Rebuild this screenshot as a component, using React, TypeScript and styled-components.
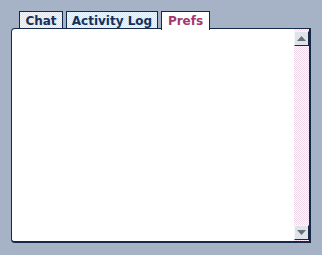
import styled, { createGlobalStyle } from "styled-components";

const GlobalStyle = createGlobalStyle`
  html, body {
    margin: 0;
    padding: 0;
    background: #a6b3c6;
  }
  body {
    font-family: "DejaVu Sans", Verdana, sans-serif;
  }
`;

const tabs = [
  { label: "Chat", width: 44 },
  { label: "Activity Log", width: 92 },
  { label: "Prefs", width: 49 },
];

const App = () => {
  const active = "Prefs";

  return (
    <>
      <GlobalStyle />
      <Frame>
        <TabRow>
          {tabs.map((tab) => (
            <Tab key={tab.label} $active={tab.label === active} $width={tab.width}>
              {tab.label}
            </Tab>
          ))}
        </TabRow>
        <Panel>
          <Content />
          <ScrollBar>
            <ArrowButton>
              <svg width="9" height="5" viewBox="0 0 9 5">
                <path d="M4.5 0 L9 5 L0 5 Z" fill="#6a707c" />
              </svg>
            </ArrowButton>
            <Track />
            <ArrowButton>
              <svg width="9" height="5" viewBox="0 0 9 5">
                <path d="M0 0 L9 0 L4.5 5 Z" fill="#6a707c" />
              </svg>
            </ArrowButton>
          </ScrollBar>
        </Panel>
      </Frame>
    </>
  );
};

export default App;

const Frame = styled("div")`
  width: 322px;
  height: 255px;
  box-sizing: border-box;
  padding: 11px 0 0 11px;
  display: flex;
  flex-direction: column;
`;

const TabRow = styled("div")`
  display: flex;
  gap: 3px;
  padding-left: 8px;
  height: 18px;
  position: relative;
  z-index: 1;
  margin-bottom: -1px;
`;

const Tab = styled("div")<{ $active?: boolean; $width: number }>`
  box-sizing: border-box;
  width: ${(p) => p.$width}px;
  height: ${(p) => (p.$active ? 19 : 18)}px;
  border: 1px solid #14294a;
  border-bottom: ${(p) => (p.$active ? "none" : "1px solid #14294a")};
  background: ${(p) =>
    p.$active
      ? "#ffffff"
      : "repeating-conic-gradient(#d4e4f0 0 25%, #f4f8fc 0 50%) 0 0 / 2px 2px"};
  color: ${(p) => (p.$active ? "#a3376e" : "#16305a")};
  font-size: 12px;
  font-weight: bold;
  line-height: 16px;
  display: flex;
  align-items: flex-start;
  justify-content: center;
  padding-top: 1px;
`;

const Panel = styled("div")`
  box-sizing: border-box;
  width: 300px;
  height: 215px;
  background: #ffffff;
  border: 1px solid #14294a;
  border-right-width: 2px;
  border-bottom-width: 2px;
  border-radius: 4px 0 0 4px;
  display: flex;
`;

const Content = styled("div")`
  flex: 1;
`;

const ScrollBar = styled("div")`
  width: 15px;
  display: flex;
  flex-direction: column;
  padding: 2px 0 1px;
  background: repeating-conic-gradient(#f2d6ea 0 25%, #ffffff 0 50%) 0 0 / 2px 2px;
`;

const ArrowButton = styled("div")`
  box-sizing: border-box;
  height: 15px;
  background: #dfe3ea;
  border-top: 1px solid #f4f6f9;
  border-left: 1px solid #f4f6f9;
  border-right: 1px solid #1c2a40;
  border-bottom: 1px solid #1c2a40;
  display: flex;
  align-items: center;
  justify-content: center;
`;

const Track = styled("div")`
  flex: 1;
`;
